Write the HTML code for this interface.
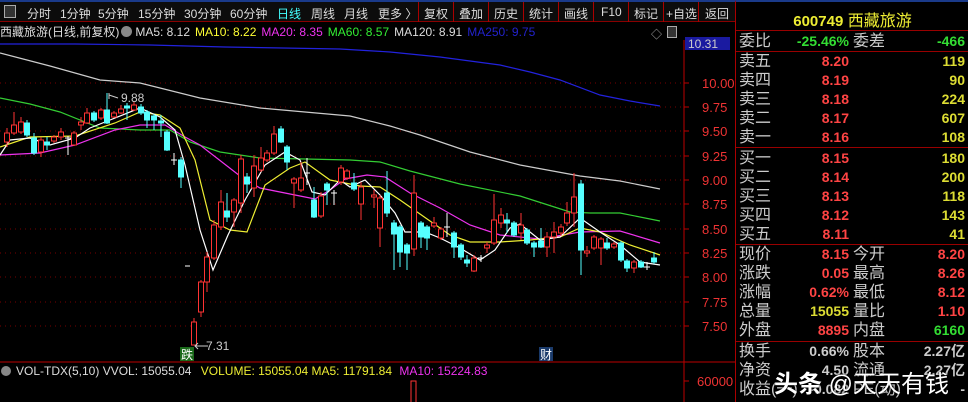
<!DOCTYPE html>
<html><head><meta charset="utf-8"><style>
*{margin:0;padding:0;box-sizing:border-box}
body{width:968px;height:402px;background:#000;overflow:hidden;position:relative;font-family:"Liberation Sans","Noto Sans CJK SC",sans-serif;color:#ddd}
.tb{position:absolute;left:0;top:0;width:735px;height:22px;background:#0c0c0c;border-top:2px solid #1a3a8a;border-bottom:1px solid #800;font-size:12px;color:#ddd}
.tb span{position:absolute;top:3px;white-space:nowrap}
.sep{position:absolute;top:0;width:1px;height:20px;background:#a00}
.leg{position:absolute;left:0;top:23px;height:16px;font-size:12px;white-space:nowrap;font-family:"Liberation Sans","Noto Sans CJK SC",sans-serif}
.leg span{margin-right:5px}
.rp{position:absolute;left:735px;top:0;width:233px;height:402px;border-left:1px solid #a00;border-top:2px solid #1a3a8a}
.row{position:absolute;left:0;width:233px;height:19px;font-size:16px;line-height:19px}
.row .l{position:absolute;left:3px;color:#ccc}
.row .l2{position:absolute;left:117px;color:#ccc}
.row .v{position:absolute;right:120px;font-weight:bold;font-size:14px}
.row .v2{position:absolute;right:4px;font-weight:bold;font-size:14px}
.hl{position:absolute;left:0;width:233px;height:1px;background:#900}
.r{color:#f44}.y{color:#dd3}.g{color:#3d3}.w{color:#ccc}
.ax{position:absolute;left:702px;font-size:13px;color:#e33}
</style></head><body>
<div class="tb">
<span style="left:4px;top:3px;width:12px;height:13px;border:1px solid #aaa;background:#333"></span>
<span style="left:27px">分时</span><span style="left:60px">1分钟</span><span style="left:98px">5分钟</span><span style="left:138px">15分钟</span><span style="left:184px">30分钟</span><span style="left:230px">60分钟</span>
<span style="left:277px;color:#4ff">日线</span><span style="left:311px">周线</span><span style="left:344px">月线</span><span style="left:378px">更多 〉</span>
<div class="sep" style="left:418px"></div><span style="left:424px">复权</span>
<div class="sep" style="left:453px"></div><span style="left:459px">叠加</span>
<div class="sep" style="left:488px"></div><span style="left:494px">历史</span>
<div class="sep" style="left:523px"></div><span style="left:529px">统计</span>
<div class="sep" style="left:558px"></div><span style="left:564px">画线</span>
<div class="sep" style="left:593px"></div><span style="left:601px">F10</span>
<div class="sep" style="left:628px"></div><span style="left:634px">标记</span>
<div class="sep" style="left:663px"></div><span style="left:666px">+自选</span>
<div class="sep" style="left:698px"></div><span style="left:705px">返回</span>
</div>
<div class="leg"><span style="color:#ddd;margin-right:2px">西藏旅游(日线,前复权)</span><span style="display:inline-block;width:11px;height:11px;border-radius:50%;background:#888;vertical-align:-1px;margin-right:3px"></span><span style="color:#ddd">MA5: 8.12</span><span style="color:#ff3">MA10: 8.22</span><span style="color:#e3e">MA20: 8.35</span><span style="color:#3e3">MA60: 8.57</span><span style="color:#ddd">MA120: 8.91</span><span style="color:#22c">MA250: 9.75</span></div>
<div style="position:absolute;left:651px;top:26px;color:#aaa;font-size:11px">◇</div>
<div style="position:absolute;left:667px;top:26px;width:10px;height:12px;border:1px solid #aaa;background:#333"></div>

<svg width="735" height="402" style="position:absolute;left:0;top:0" xmlns="http://www.w3.org/2000/svg">
<g stroke="#700" stroke-dasharray="1,4" stroke-width="1">
<path d="M0 83H684M0 107H684M0 131H684M0 156H684M0 180H684M0 204H684M0 229H684M0 253H684M0 277H684M0 302H684M0 326H684"/>
</g>
<path d="M684 40V402M0 362H735" stroke="#b00"/>
<g stroke="#b00"><path d="M684 83h5M684 107h5M684 131h5M684 156h5M684 180h5M684 204h5M684 229h5M684 253h5M684 277h5M684 302h5M684 326h5M684 381h5"/></g>
<rect x="685" y="37" width="45" height="13" fill="#1a1aa0"/>
<text x="688" y="48" fill="#ccc" font-size="12" font-family="Liberation Sans">10.31</text>
<g fill="none" stroke-width="1.2">
<polyline stroke="#22d" points="0,44 75,44 150,45 225,47 340,49 390,52 440,57 500,65 530,72 560,80 600,95 630,101 660,106"/>
<polyline stroke="#ccc" points="0,53 50,66 100,80 140,83 200,98 260,108 350,116 390,126 420,135 470,152 520,165 580,176 620,181 660,189"/>
<polyline stroke="#3c3" points="0,98 30,104 60,112 100,128 140,130 170,130 190,142 220,152 260,158 350,160 380,162 410,171 460,184 520,196 570,212 590,213 620,213 660,221"/>
<polyline stroke="#e3e" points="0,155 40,153 75,145 115,130 140,125 165,125 185,137 200,145 240,176 260,188 300,196 315,199 330,190 345,179 367,175 385,177 410,193 440,208 470,225 500,235 540,239 580,232 620,231 660,243"/>
<polyline stroke="#ee3" points="0,147 30,137 75,136 115,123 140,112 160,115 180,128 195,160 210,220 230,230 247,232 265,185 290,168 305,162 330,180 345,183 360,186 380,187 400,200 420,214 450,235 470,242 500,242 530,240 560,237 580,228 600,232 630,245 660,255"/>
<polyline stroke="#fff" points="0,155 10,140 30,138 50,145 75,138 90,128 110,120 140,108 160,117 175,130 185,165 200,230 213,270 228,235 245,200 265,165 285,152 300,160 312,192 325,195 340,180 350,187 365,180 380,195 395,213 405,232 425,232 440,238 460,248 480,260 495,250 510,228 520,224 540,240 560,237 580,218 600,232 620,245 640,262 660,265"/>
</g>
<g stroke="#f33" fill="#000" stroke-width="1">
<path d="M7 128V147M14 112V135M21 117V134M41 137V157M54 135V143M61 128V140M74 131V146M81 117V130M87 108V124M101 108V120M114 111V118M121 105V114M134 102V111M194 318V345M201 280V317M207 252V292M214 220V260M221 190V230M234 198V227M241 155V213M254 155V197M261 147V172M267 150V162M274 126V155M294 177V208M301 162V192M321 192V218M341 165V185M347 169V180M361 182V220M374 190V208M380 195V247M414 175V256M434 217V228M441 227V240M474 255V272M487 242V253M494 194V245M501 208V228M521 213V240M547 232V257M554 222V253M561 224V236M567 202V226M574 173V227M587 246V257M594 235V250M601 237V265M614 242V249M634 260V273"/>
<rect x="4.5" y="133" width="5" height="9"/><rect x="11.5" y="125" width="5" height="8"/><rect x="18.5" y="122" width="5" height="10"/><rect x="38.5" y="140" width="5" height="12"/><rect x="51.5" y="137" width="5" height="4"/><rect x="58.5" y="132" width="5" height="5"/><rect x="71.5" y="133" width="5" height="12"/><rect x="78.5" y="122" width="5" height="3"/><rect x="84.5" y="113" width="5" height="10"/><rect x="98.5" y="110" width="5" height="8"/><rect x="111.5" y="113" width="5" height="4"/><rect x="118.5" y="109" width="5" height="4"/><rect x="131.5" y="105" width="5" height="5"/>
<rect x="191.5" y="322" width="5" height="23"/><rect x="198.5" y="282" width="5" height="30"/><rect x="204.5" y="257" width="5" height="25"/><rect x="211.5" y="225" width="5" height="33"/><rect x="218.5" y="202" width="5" height="25"/><rect x="231.5" y="200" width="5" height="12"/><rect x="238.5" y="159" width="5" height="44"/><rect x="251.5" y="166" width="5" height="22"/><rect x="258.5" y="158" width="5" height="12"/><rect x="264.5" y="153" width="5" height="7"/><rect x="271.5" y="134" width="5" height="19"/><rect x="291.5" y="179" width="5" height="4"/><rect x="298.5" y="178" width="5" height="12"/><rect x="318.5" y="196" width="5" height="20"/><rect x="338.5" y="168" width="5" height="14"/><rect x="344.5" y="171" width="5" height="7"/><rect x="358.5" y="187" width="5" height="17"/><rect x="371.5" y="195" width="5" height="2"/><rect x="377.5" y="198" width="5" height="30"/><rect x="411.5" y="193" width="5" height="56"/><rect x="431.5" y="223" width="5" height="3"/><rect x="438.5" y="229" width="5" height="9"/><rect x="471.5" y="258" width="5" height="13"/><rect x="484.5" y="245" width="5" height="3"/><rect x="491.5" y="220" width="5" height="23"/><rect x="498.5" y="215" width="5" height="8"/><rect x="518.5" y="225" width="5" height="8"/><rect x="544.5" y="237" width="5" height="10"/><rect x="551.5" y="232" width="5" height="5"/><rect x="558.5" y="227" width="5" height="6"/><rect x="564.5" y="213" width="5" height="10"/><rect x="571.5" y="197" width="5" height="16"/><rect x="584.5" y="251" width="5" height="2"/><rect x="591.5" y="237" width="5" height="11"/><rect x="598.5" y="239" width="5" height="9"/><rect x="611.5" y="244" width="5" height="3"/><rect x="631.5" y="262" width="5" height="6"/>
<rect x="411" y="381" width="5" height="25"/>
</g>
<g stroke="#5ff" fill="#5ff" stroke-width="1">
<path d="M27 120V137M34 133V155M47 137V150M94 111V122M107 93V124M127 103V120M141 104V115M147 110V128M154 114V130M161 115V137M167 130V151M181 157V188M227 193V222M247 173V193M281 126V143M287 145V170M314 187V218M327 182V205M354 173V191M387 171V217M394 220V270M400 225V267M407 243V270M421 221V248M427 225V250M454 231V258M461 243V260M467 255V267M507 213V233M514 221V237M527 228V245M534 241V257M541 228V248M581 180V275M607 238V250M621 241V262M627 259V272M641 260V268M654 252V264"/>
<rect x="24.5" y="123" width="5" height="12"/><rect x="31.5" y="138" width="5" height="15"/><rect x="44.5" y="142" width="5" height="3"/><rect x="91.5" y="113" width="5" height="7"/><rect x="104.5" y="110" width="5" height="13"/><rect x="124.5" y="106" width="5" height="2"/><rect x="138.5" y="107" width="5" height="6"/><rect x="144.5" y="112" width="5" height="8"/><rect x="151.5" y="116" width="5" height="4"/><rect x="158.5" y="121" width="5" height="2"/><rect x="164.5" y="132" width="5" height="18"/><rect x="178.5" y="160" width="5" height="17"/><rect x="224.5" y="211" width="5" height="6"/><rect x="244.5" y="177" width="5" height="7"/><rect x="278.5" y="129" width="5" height="13"/><rect x="284.5" y="147" width="5" height="15"/><rect x="311.5" y="200" width="5" height="17"/><rect x="324.5" y="184" width="5" height="6"/><rect x="351.5" y="183" width="5" height="6"/><rect x="384.5" y="193" width="5" height="20"/><rect x="391.5" y="223" width="5" height="11"/><rect x="397.5" y="227" width="5" height="25"/><rect x="404.5" y="245" width="5" height="8"/><rect x="418.5" y="223" width="5" height="14"/><rect x="424.5" y="227" width="5" height="11"/><rect x="451.5" y="233" width="5" height="14"/><rect x="458.5" y="245" width="5" height="12"/><rect x="464.5" y="260" width="5" height="3"/><rect x="504.5" y="220" width="5" height="3"/><rect x="511.5" y="223" width="5" height="12"/><rect x="524.5" y="230" width="5" height="13"/><rect x="531.5" y="243" width="5" height="4"/><rect x="538.5" y="241" width="5" height="6"/><rect x="578.5" y="184" width="5" height="66"/><rect x="604.5" y="243" width="5" height="5"/><rect x="618.5" y="243" width="5" height="17"/><rect x="624.5" y="261" width="5" height="7"/><rect x="638.5" y="262" width="5" height="5"/><rect x="651.5" y="258" width="5" height="4"/>
</g>
<g stroke="#fff" stroke-width="1">
<path d="M68 136V155M65 138H71M174 153V165M171 160H177M185 266H190M307 158V185M304 173H310M334 190V205M331 193H337M447 213V237M444 227H450M481 255V262M478 258H484M647 262V270M644 267H650"/>
</g>
<path d="M109 93V99M109 95L118 98" stroke="#ccc" fill="none"/>
<text x="121" y="102" fill="#ccc" font-size="12" font-family="Liberation Sans">9.88</text>
<path d="M195 346H208M198 343L195 346L198 349" stroke="#ccc" fill="none"/>
<text x="206" y="350" fill="#ccc" font-size="12" font-family="Liberation Sans">7.31</text>
<rect x="180" y="347" width="14" height="14" fill="#1a6a1a"/>
<text x="181" y="359" fill="#fff" font-size="12" font-family="Liberation Sans, Noto Sans CJK SC, sans-serif">跌</text>
<rect x="539" y="347" width="14" height="14" fill="#1a3a6a"/>
<text x="540" y="359" fill="#fff" font-size="12" font-family="Liberation Sans, Noto Sans CJK SC, sans-serif">财</text>
<circle cx="6" cy="371" r="5" fill="#888"/>
<text x="16" y="375" font-size="12" font-family="Liberation Sans"><tspan fill="#ddd">VOL-TDX(5,10) VVOL: 15055.04 </tspan><tspan fill="#ee3" dx="6">VOLUME: 15055.04  MA5: 11791.84 </tspan><tspan fill="#e3e" dx="4">MA10: 15224.83</tspan></text>
</svg>
<div class="ax" style="top:76px">10.00</div><div class="ax" style="top:100px">9.75</div><div class="ax" style="top:124px">9.50</div><div class="ax" style="top:149px">9.25</div><div class="ax" style="top:173px">9.00</div><div class="ax" style="top:197px">8.75</div><div class="ax" style="top:222px">8.50</div><div class="ax" style="top:246px">8.25</div><div class="ax" style="top:270px">8.00</div><div class="ax" style="top:295px">7.75</div><div class="ax" style="top:319px">7.50</div><div class="ax" style="top:374px;left:697px">60000</div>

<div class="rp">
<div style="position:absolute;left:0;top:5px;width:233px;text-align:center;font-size:16px;color:#ee3"><b style="font-size:15px">600749</b> 西藏旅游</div>
<div class="hl" style="top:28px"></div>
<div class="row" style="top:30px"><span class="l">委比</span><span class="v g">-25.46%</span><span class="l2">委差</span><span class="v2 g">-466</span></div>
<div class="hl" style="top:49px"></div>
<div class="row" style="top:50px"><span class="l">卖五</span><span class="v r">8.20</span><span class="v2 y">119</span></div>
<div class="row" style="top:69px"><span class="l">卖四</span><span class="v r">8.19</span><span class="v2 y">90</span></div>
<div class="row" style="top:88px"><span class="l">卖三</span><span class="v r">8.18</span><span class="v2 y">224</span></div>
<div class="row" style="top:107px"><span class="l">卖二</span><span class="v r">8.17</span><span class="v2 y">607</span></div>
<div class="row" style="top:126px"><span class="l">卖一</span><span class="v r">8.16</span><span class="v2 y">108</span></div>
<div class="hl" style="top:145px"></div>
<div class="row" style="top:147px"><span class="l">买一</span><span class="v r">8.15</span><span class="v2 y">180</span></div>
<div class="row" style="top:166px"><span class="l">买二</span><span class="v r">8.14</span><span class="v2 y">200</span></div>
<div class="row" style="top:185px"><span class="l">买三</span><span class="v r">8.13</span><span class="v2 y">118</span></div>
<div class="row" style="top:204px"><span class="l">买四</span><span class="v r">8.12</span><span class="v2 y">143</span></div>
<div class="row" style="top:223px"><span class="l">买五</span><span class="v r">8.11</span><span class="v2 y">41</span></div>
<div class="hl" style="top:242px"></div>
<div class="row" style="top:243px"><span class="l">现价</span><span class="v r">8.15</span><span class="l2">今开</span><span class="v2 r">8.20</span></div>
<div class="row" style="top:262px"><span class="l">涨跌</span><span class="v r">0.05</span><span class="l2">最高</span><span class="v2 r">8.26</span></div>
<div class="row" style="top:281px"><span class="l">涨幅</span><span class="v r">0.62%</span><span class="l2">最低</span><span class="v2 r">8.12</span></div>
<div class="row" style="top:300px"><span class="l">总量</span><span class="v y">15055</span><span class="l2">量比</span><span class="v2 r">1.10</span></div>
<div class="row" style="top:319px"><span class="l">外盘</span><span class="v r">8895</span><span class="l2">内盘</span><span class="v2 g">6160</span></div>
<div class="hl" style="top:339px"></div>
<div class="row" style="top:340px"><span class="l">换手</span><span class="v w">0.66%</span><span class="l2">股本</span><span class="v2 w">2.27亿</span></div>
<div class="row" style="top:359px"><span class="l">净资</span><span class="v w">4.50</span><span class="l2">流通</span><span class="v2 w">2.27亿</span></div>
<div class="row" style="top:378px"><span class="l">收益(一)</span><span class="v w">-0.082</span><span class="l2">PE(动)</span><span class="v2 w">-</span></div>
<div style="position:absolute;left:38px;top:362px;font-size:24px;color:#fff;font-weight:bold;white-space:nowrap;text-shadow:0 0 2px #000;font-family:'Liberation Sans','Noto Sans CJK SC',sans-serif">头条 <span style="font-weight:normal">@天天有钱</span></div>
</div>
</body></html>
